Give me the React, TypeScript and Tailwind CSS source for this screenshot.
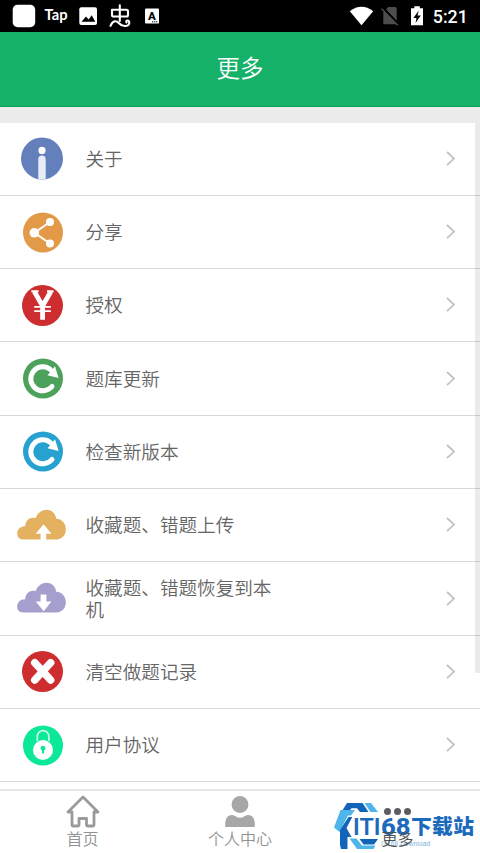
import type { ReactNode } from "react";

function Disc({ color, r = 20, cx = 43, children }: { color: string; r?: number; cx?: number; children?: ReactNode }) {
  return (
    <>
      <circle cx={cx} cy="36.5" r={r} fill={color} />
      {children}
    </>
  );
}

function Refresh({ color }: { color: string }) {
  return (
    <Disc color={color}>
      <path d="M52 44.5A12 12 0 1 1 50.5 27.6" fill="none" stroke="#fff" strokeWidth="5" strokeLinecap="round" />
      <path d="M55 24.2L58.6 36L47.5 33.2Z" fill="#fff" />
    </Disc>
  );
}

function Cloud({ color, up }: { color: string; up?: boolean }) {
  return (
    <>
      <path
        d="M23 50.5C14.5 50.5 15.5 36.8 25.2 37.3C25.4 31.2 30.2 27.5 35.7 29C40 17.6 54.5 18.3 56.3 29.8C69 30.5 68.8 49.7 57.2 50.5Z"
        fill={color}
      />
      <path
        d={up ? "M43.5 35.3L51.5 44.8H46.2V51H40.6V44.8H35.7Z" : "M40.6 32.5H46.4V39.6H51.4L43.7 49.3L35.8 39.6H40.6Z"}
        fill="#fff"
      />
    </>
  );
}

const rows: { label: string; icon: ReactNode }[] = [
  {
    label: "关于",
    icon: (
      <Disc color="#637fbc" r={21} cx={42}>
        <circle cx="42" cy="28.4" r="3.6" fill="#fff" />
        <path d="M38.3 57.2V37.3A3.7 3.7 0 0 1 45.7 37.3V57.2Z" fill="#e8ecf7" />
      </Disc>
    ),
  },
  {
    label: "分享",
    icon: (
      <Disc color="#e29a49">
        <path d="M50.3 25.7L34.5 36.8L50.3 47.8" fill="none" stroke="#fff" strokeWidth="2" />
        <circle cx="50" cy="26" r="4" fill="#fff" />
        <circle cx="34.3" cy="36.8" r="4.8" fill="#fff" />
        <circle cx="50" cy="47.6" r="4" fill="#fff" />
      </Disc>
    ),
  },
  {
    label: "授权",
    icon: (
      <Disc color="#cd2d2f" r={20.5} cx={42.5}>
        <path d="M34.3 22.5L42.6 37L50.9 22.5M42.6 36V50.8" fill="none" stroke="#fff" strokeWidth="4.8" />
        <path d="M31.3 22.3H38.6M47 22.3H53.6" stroke="#fff" strokeWidth="2" />
        <path d="M34.2 37.9H50.9M34.2 42.1H50.9" stroke="#fff" strokeWidth="1.9" />
      </Disc>
    ),
  },
  { label: "题库更新", icon: <Refresh color="#4ca25b" /> },
  { label: "检查新版本", icon: <Refresh color="#27a1cf" /> },
  { label: "收藏题、错题上传", icon: <Cloud color="#e4b160" up /> },
  { label: "收藏题、错题恢复到本机", icon: <Cloud color="#a59fcd" /> },
  {
    label: "清空做题记录",
    icon: (
      <Disc color="#cd2d2f" r={20.5} cx={42.5}>
        <path d="M34.8 27.8L50.6 45M50.6 27.8L34.8 45" stroke="#fff" strokeWidth="7.6" strokeLinecap="round" />
      </Disc>
    ),
  },
  {
    label: "用户协议",
    icon: (
      <Disc color="#0be898">
        <path d="M37.3 32V27.4A5.8 5.8 0 0 1 48.9 27.4V32" fill="none" stroke="#caffeb" strokeWidth="1.7" />
        <circle cx="43" cy="41" r="10" fill="#fff" />
        <circle cx="43" cy="39.2" r="2.4" fill="#0be898" />
        <path d="M42 40H44V44.4H42Z" fill="#0be898" />
      </Disc>
    ),
  },
];

function StatusBar() {
  return (
    <div className="flex h-8 shrink-0 items-center bg-black">
      <svg width="480" height="32" viewBox="0 0 480 32">
        <rect x="12.7" y="4.7" width="22.5" height="22.5" rx="5" fill="#fff" />
        <text x="44.5" y="20" fill="#fff" fontFamily="Lato, sans-serif" fontWeight="700" fontSize="15" textLength="23" lengthAdjust="spacingAndGlyphs">Tap</text>
        <rect x="79.3" y="7.2" width="17.7" height="17.8" rx="2" fill="#fff" />
        <path d="M81.5 21.8L86 16.5L88.6 19.4L91.7 15.2L95.3 21.8Z" fill="#000" />
        <g fill="none" stroke="#fff" strokeWidth="2.1" strokeLinecap="round" strokeLinejoin="round">
          <path d="M119.8 5.2V21M112 9.7H126.5Q128 9.7 128 11.2V15Q128 16.5 126.5 16.5H113.5Q112 16.5 112 15Z" />
          <path d="M110.5 25.8C113 20 116.5 20.5 119 23.2C123 27.6 129.5 26.4 129.3 22.4C129 19.6 125.3 20.2 126.5 22.5" />
        </g>
        <rect x="145" y="8.5" width="14" height="15" rx="1" fill="#fff" />
        <text x="148" y="19.5" fill="#000" fontFamily="Roboto, sans-serif" fontWeight="800" fontSize="11.5">A</text>
        <path d="M152 21.8H158" stroke="#000" strokeWidth="1" strokeDasharray="1.3 .7" />
        <path d="M349.8 11.2Q361.5 2.3 373.2 11.2L361.5 25.2Z" fill="#fff" />
        <path d="M388.2 7H395Q396.7 7 396.7 9V24.3H383.3V12Z" fill="#4d4d4d" />
        <path d="M382 7.3L398.5 24.8" stroke="#000" strokeWidth="3" />
        <path d="M381.5 8.6L397.7 25.3" stroke="#565656" strokeWidth="1.3" />
        <path d="M414.3 6.2H419.8V8.2H423V25.2H411V8.2H414.3Z" fill="#fff" />
        <path d="M418.8 10.5L413.4 18H416.5L415.5 23L420.8 15.6H417.5Z" fill="#000" />
        <text x="432.8" y="23.2" fill="#fff" fontFamily="Roboto, sans-serif" fontWeight="500" fontSize="19.2" textLength="35" lengthAdjust="spacingAndGlyphs">5:21</text>
      </svg>
    </div>
  );
}

function SettingsRow({ label, icon }: { label: string; icon: ReactNode }) {
  return (
    <li className="flex h-[73.33px] shrink-0 items-center border-b border-[#d8d8d8]">
      <svg className="w-[85.5px] shrink-0" height="73" viewBox="0 0 85.5 73">{icon}</svg>
      <span className="w-[190px] pb-[2px] text-[18.6px] leading-[22px] text-[#656565]">{label}</span>
      <svg className="mr-[23px] ml-auto" width="12" height="18" viewBox="0 0 12 18">
        <path d="M2 2L9 8.6L2 15.2" fill="none" stroke="#c3c3c6" strokeWidth="1.8" />
      </svg>
    </li>
  );
}

function Watermark() {
  return (
    <svg className="absolute top-[8px] left-[12px]" width="148" height="53" viewBox="332 800 148 53">
      <path d="M347 804H362.5L368.5 813H360L357 809.2H351.5L348.5 813H341.5Z" fill="#1264ba" />
      <path d="M364.5 804H371L378 813H370.5Z" fill="#4db5ea" />
      <path d="M340.5 811H355L351 816.5H348L341.5 829L339.5 833L334 828.5Z" fill="#4db5ea" />
      <path d="M348.5 818L352.3 818L346.5 829L351.5 838H347.5V850H341L340 846V831Z" fill="#1264ba" />
      <path d="M349.5 839.5H356.5L362 846.5H375.5L373.5 850H357Z" fill="#4db5ea" />
      <path d="M359.5 840H378L374 845.5H363.5Z" fill="#1264ba" />
      <g fill="#1c6abb">
        <text x="353" y="836.2" fontFamily="Roboto, sans-serif" fontWeight="600" fontSize="23.5" textLength="27.5" lengthAdjust="spacingAndGlyphs">ITI</text>
        <text x="381" y="836.2" fontFamily="Roboto, sans-serif" fontWeight="800" fontSize="23.5" textLength="29.5" lengthAdjust="spacingAndGlyphs">68</text>
        <text x="411" y="835" fontFamily="'Noto Sans CJK SC', sans-serif" fontWeight="900" fontSize="20.8" textLength="63">下载站</text>
      </g>
      <text x="381" y="846.7" fill="#7db3dd" fontFamily="'Liberation Sans', sans-serif" fontSize="6.5" textLength="49">IT168 Download</text>
    </svg>
  );
}

function TabBar() {
  return (
    <nav className="grid h-[64px] shrink-0 grid-cols-[165px_150px_165px] border-t-2 border-[#e7e7e7] bg-white text-[16px] leading-[20px] text-[#929292]">
      <div className="flex flex-col items-center">
        <svg className="mt-[3px] h-[34px]" width="36" height="34" viewBox="65 794 36 34">
          <path d="M83 797L68 812H72V824.5Q72 826 73.5 826H77.5Q79 826 79 824.5V818.5H86.5V824.5Q86.5 826 88 826H92.5Q94 826 94 824.5V812H98Z" fill="none" stroke="#9a9a9a" strokeWidth="2.8" strokeLinejoin="round" />
        </svg>
        <span>首页</span>
      </div>
      <div className="flex flex-col items-center">
        <svg className="mt-[3px] h-[34px]" width="36" height="34" viewBox="222 794 36 34">
          <circle cx="240" cy="804.5" r="8.4" fill="#a7a7a7" />
          <path d="M225.2 827V822.5Q226 815 232 815Q234 815 236 816.5Q240 819.2 244 816.5Q246 815 248 815Q254 815 254.8 822.5V827Z" fill="#a7a7a7" />
        </svg>
        <span>个人中心</span>
      </div>
      <div className="relative flex flex-col items-center">
        <div className="absolute top-0 left-[5px]">
          <Watermark />
        </div>
        <div className="relative mt-[17px] flex h-[20px] gap-[3.5px]">
          <span className="size-[6.5px] rounded-full bg-[#5d5d61]" />
          <span className="size-[6.5px] rounded-full bg-[#5d5d61]" />
          <span className="size-[6.5px] rounded-full bg-[#5d5d61]" />
        </div>
        <span className="relative text-[#505050]">更多</span>
      </div>
    </nav>
  );
}

export default function App() {
  return (
    <div className="flex h-[853px] w-[480px] flex-col overflow-hidden bg-white font-['Noto_Sans_CJK_SC',sans-serif] font-[350]">
      <StatusBar />
      <header className="flex h-[75px] shrink-0 items-center justify-center border-b border-[#0ba05a] bg-[#16b168] pb-[2px] text-[23.5px] text-white">更多</header>
      <main className="relative min-h-0 flex-1 overflow-hidden">
        <div className="h-[15.5px] bg-[#ebebeb]" />
        <ul className="flex flex-col">
          {rows.map((row) => (
            <SettingsRow key={row.label} {...row} />
          ))}
        </ul>
        <div className="absolute top-[15.5px] right-0 h-[550.5px] w-[5px] bg-black/8" />
      </main>
      <TabBar />
    </div>
  );
}
